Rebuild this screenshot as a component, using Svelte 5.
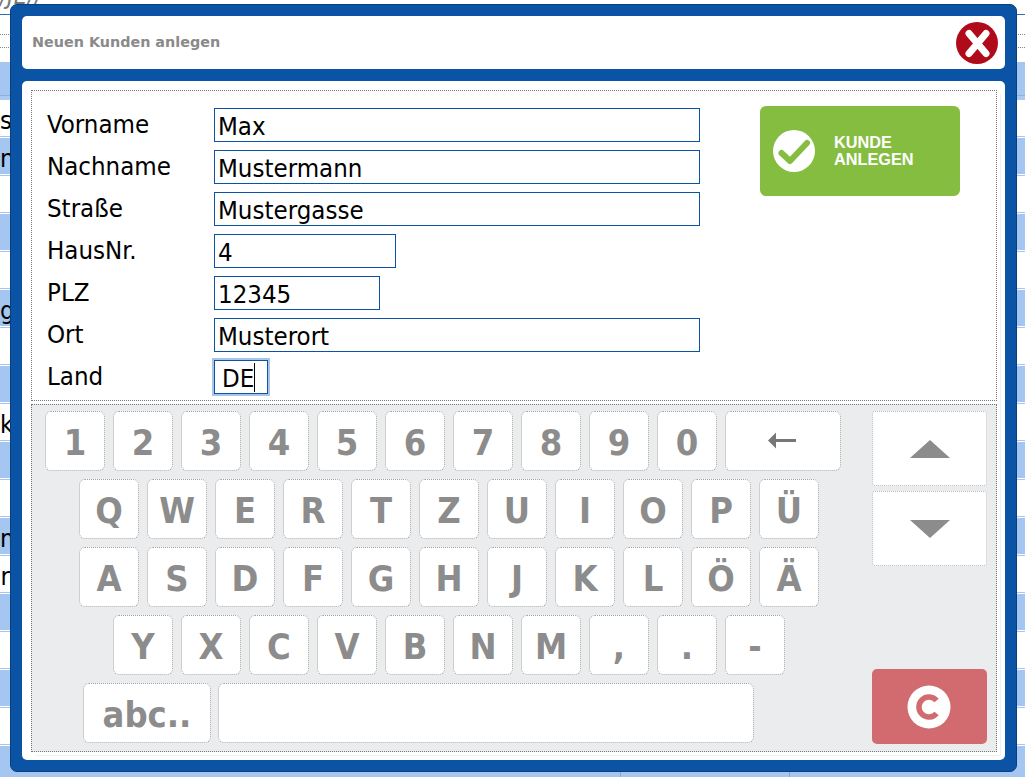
<script>
  const fields = [
    { label: 'Vorname', value: 'Max', cls: 'wide' },
    { label: 'Nachname', value: 'Mustermann', cls: 'wide' },
    { label: 'Straße', value: 'Mustergasse', cls: 'wide' },
    { label: 'HausNr.', value: '4', cls: 'house' },
    { label: 'PLZ', value: '12345', cls: 'zip' },
    { label: 'Ort', value: 'Musterort', cls: 'wide' },
    { label: 'Land', value: 'DE', cls: 'land' }
  ];

  const keyRows = [
    { cls: 'r1', keys: ['1', '2', '3', '4', '5', '6', '7', '8', '9', '0'] },
    { cls: 'r2', keys: ['Q', 'W', 'E', 'R', 'T', 'Z', 'U', 'I', 'O', 'P', 'Ü'] },
    { cls: 'r2', keys: ['A', 'S', 'D', 'F', 'G', 'H', 'J', 'K', 'L', 'Ö', 'Ä'] },
    { cls: 'r3', keys: ['Y', 'X', 'C', 'V', 'B', 'N', 'M', ',', '.', '-'] }
  ];

  // letters of the page behind the dialog that stick out on the left
  const bgRows = ['s', 'n', '', '', '', 'g', '', '', 'k', '', '', 'm', 'r', '', '', '', '', ''];
</script>

<div class="page">
  <div class="bg-head">
    <div class="crumb"><span>/JE//</span></div>
    <div class="dots d1"></div>
    <div class="dots d2"></div>
  </div>
  <div class="bg-first"></div>
  {#each bgRows as ch, i}
    <div class="bg-row" class:blue={i % 2 === 1} class:first={i === 0}>
      <span class="peek">{ch}</span>
    </div>
  {/each}
  <div class="bg-cols">
    <div class="c1"></div>
    <div class="c2"></div>
    <div class="c3"></div>
  </div>

  <div class="modal">
    <header class="titlebar">
      <span class="title">Neuen Kunden anlegen</span>
      <svg class="close" width="44" height="44" viewBox="0 0 44 44">
        <circle cx="22" cy="22" r="21" fill="#b00b1b" />
        <path d="M14 12.5 L31 32.5 M31 12.5 L14 32.5" stroke="#fff" stroke-width="7" stroke-linecap="round" />
      </svg>
    </header>

    <div class="panel">
      <div class="inner">
        <section class="form">
          <div class="fields">
            {#each fields as f}
              <div class="field">
                <span class="label">{f.label}</span>
                <div class="input {f.cls}">{f.value}{#if f.cls === 'land'}<i class="caret"></i>{/if}</div>
              </div>
            {/each}
          </div>
          <button class="create">
            <svg width="44" height="44" viewBox="0 0 44 44">
              <circle cx="22" cy="22" r="21" fill="#fff" />
              <path d="M9.5 24 L18 32 L35 14" fill="none" stroke="#85bd41" stroke-width="6" stroke-linecap="round" stroke-linejoin="round" />
            </svg>
            <span>KUNDE<br />ANLEGEN</span>
          </button>
        </section>

        <section class="keyboard">
          <div class="keys">
            {#each keyRows as row, i}
              <div class="row {row.cls}">
                {#each row.keys as k}
                  <div class="key">{k}</div>
                {/each}
                {#if i === 0}
                  <div class="key back">
                    <svg width="30" height="18" viewBox="0 0 30 18">
                      <path d="M0 8.5 L8 0.5 V7 H28 V10 H8 V16.5 Z" fill="#777" />
                    </svg>
                  </div>
                {/if}
              </div>
            {/each}
            <div class="row r4">
              <div class="key abc">abc..</div>
              <div class="key space"></div>
            </div>
          </div>
          <div class="side">
            <div class="key arrow">
              <svg width="40" height="18" viewBox="0 0 40 18"><path d="M20 0 L40 18 H0 Z" fill="#8c8c8c" /></svg>
            </div>
            <div class="key arrow down">
              <svg width="40" height="18" viewBox="0 0 40 18"><path d="M0 0 H40 L20 18 Z" fill="#8c8c8c" /></svg>
            </div>
            <div class="clear">
              <svg width="44" height="44" viewBox="0 0 44 44">
                <circle cx="22" cy="22" r="21.5" fill="#fff" />
                <path d="M29.6 15.6 A10 10 0 1 0 29.6 28.4" fill="none" stroke="#d26b70" stroke-width="5.5" />
              </svg>
            </div>
          </div>
        </section>
      </div>
    </div>
  </div>
</div>

<style>
  :global(body) {
    margin: 0;
    background: #fff;
    overflow: hidden;
  }

  .page {
    position: relative;
    width: 1025px;
    height: 777px;
    overflow: hidden;
    font-family: "DejaVu Sans Condensed", "DejaVu Sans", sans-serif;
    color: #000;
  }

  .bg-head {
    height: 62px;
    position: relative;
  }

  .crumb {
    height: 14px;
    border-bottom: 1px solid #2f6fb5;
    overflow: hidden;
  }

  .crumb span {
    display: block;
    margin-top: -18px;
    font-size: 24px;
    line-height: 28px;
    font-style: italic;
    color: #777;
  }

  .dots {
    border-top: 1px dotted #888;
    margin-top: 19px;
  }

  .d2 {
    margin-top: 12px;
  }

  .bg-first {
    height: 33px;
    background: #a4c6f0;
    border-bottom: 1px solid #8fb0dc;
    box-shadow: 0 4px 0 #a9caf1;
  }

  .bg-row {
    height: 36px;
    margin-top: 1px;
    padding: 0;
    border-top: 1px solid #a4c6f0;
    border-bottom: 1px solid #a4c6f0;
    margin-bottom: 1px;
    font-size: 25.5px;
    line-height: 40px;
  }

  .bg-row.first {
    border-top: 0;
    margin-top: 4px;
  }

  .bg-row.blue {
    height: 36px;
    background: #a4c6f0;
    border: 0;
    margin: 1px 0;
  }

  .peek {
    display: block;
    width: 10px;
    text-align: right;
    white-space: nowrap;
  }

  .bg-cols {
    position: absolute;
    left: 0;
    right: 0;
    bottom: 0;
    height: 5px;
    background: #a4c6f0;
    display: flex;
  }

  .c1 {
    width: 620px;
  }

  .c2 {
    width: 168px;
    border-left: 1px solid #7ea6d8;
  }

  .c3 {
    flex: 1;
    border-left: 1px solid #7ea6d8;
  }

  /* dialog */
  .modal {
    position: absolute;
    left: 10px;
    top: 4px;
    width: 1007px;
    height: 768px;
    box-sizing: border-box;
    padding: 11px;
    display: flex;
    flex-direction: column;
    gap: 12px;
    background: #0b53a5;
    border: 1px solid #0a3f7f;
    border-radius: 7px;
  }

  .titlebar {
    height: 53px;
    flex: none;
    background: #fff;
    border-radius: 5px;
    display: flex;
    align-items: center;
    justify-content: space-between;
    padding: 0 6px 0 10px;
  }

  .title {
    font-family: "DejaVu Sans", sans-serif;
    font-size: 14.35px;
    font-weight: bold;
    color: #8a8a8a;
    margin-top: -1px;
  }

  .close {
    display: block;
  }

  .panel {
    flex: 1;
    background: #fff;
    border-radius: 5px;
    padding: 9px 8px 8px 9px;
    min-height: 0;
  }

  .inner {
    height: 100%;
    box-sizing: border-box;
    display: flex;
    flex-direction: column;
    gap: 3px;
    box-shadow: 3px 3px 0 #fff, 4px 4px 0 #eff1f4;
  }

  .form {
    display: flex;
    height: 311px;
    box-sizing: border-box;
    border: 1px dotted #777;
    padding: 17px 0 0 15px;
    flex: none;
  }

  .fields {
    width: 653px;
    display: flex;
    flex-direction: column;
    gap: 8px;
  }

  .field {
    display: flex;
    height: 34px;
  }

  .label {
    width: 167px;
    font-size: 25.6px;
    line-height: 32px;
  }

  .input {
    box-sizing: border-box;
    height: 34px;
    border: 1px solid #0b53a5;
    padding: 0 3px;
    font-size: 25.6px;
    line-height: 34px;
    white-space: nowrap;
  }

  .wide {
    width: 486px;
  }

  .house {
    width: 182px;
  }

  .zip {
    width: 166px;
  }

  .land {
    width: 54px;
    padding-left: 7px;
    box-shadow: 0 0 0 2px #a9c4e6;
  }

  .caret {
    display: inline-block;
    width: 1px;
    height: 29px;
    background: #000;
    vertical-align: -5px;
  }

  .create {
    width: 200px;
    height: 90px;
    margin: -2px 0 0 60px;
    padding: 0 0 0 12px;
    border: 0;
    border-radius: 6px;
    background: #85bd41;
    color: #fff;
    display: flex;
    align-items: center;
    gap: 18px;
    font-family: "Liberation Sans", sans-serif;
    font-size: 16.3px;
    font-weight: bold;
    line-height: 17px;
    text-align: left;
  }

  .keyboard {
    flex: 1;
    min-height: 0;
    box-sizing: border-box;
    border: 1px dotted #777;
    background: #ebecee;
    padding: 6px 9px 0 13px;
    display: flex;
    justify-content: space-between;
  }

  .keys {
    display: flex;
    flex-direction: column;
    gap: 8px;
  }

  .row {
    display: flex;
    gap: 8px;
  }

  .r2 {
    padding-left: 34px;
  }

  .r3 {
    padding-left: 68px;
  }

  .r4 {
    padding-left: 38px;
    gap: 7px;
  }

  .key {
    box-sizing: border-box;
    width: 60px;
    height: 60px;
    padding-top: 4px;
    background: #fff;
    border: 1px dotted #a0a0a0;
    border-radius: 6px;
    display: flex;
    align-items: center;
    justify-content: center;
    color: #8c8c8c;
    font-size: 36px;
    font-weight: bold;
    line-height: 1;
  }

  .back {
    width: 116px;
    padding-top: 0;
  }

  .back svg {
    margin-right: 1px;
  }

  .abc {
    width: 128px;
  }

  .space {
    width: 536px;
  }

  .side {
    width: 115px;
    display: flex;
    flex-direction: column;
    gap: 5px;
  }

  .arrow {
    width: 115px;
    height: 75px;
    padding-top: 0;
    border-radius: 3px;
    border-color: #bbb;
  }

  .arrow svg {
    margin-top: 1px;
  }

  .clear {
    width: 115px;
    height: 75px;
    margin-top: 98px;
    background: #d26b70;
    border-radius: 5px;
    display: flex;
    align-items: center;
    justify-content: center;
  }

  .clear svg {
    margin-right: 1px;
  }
</style>
